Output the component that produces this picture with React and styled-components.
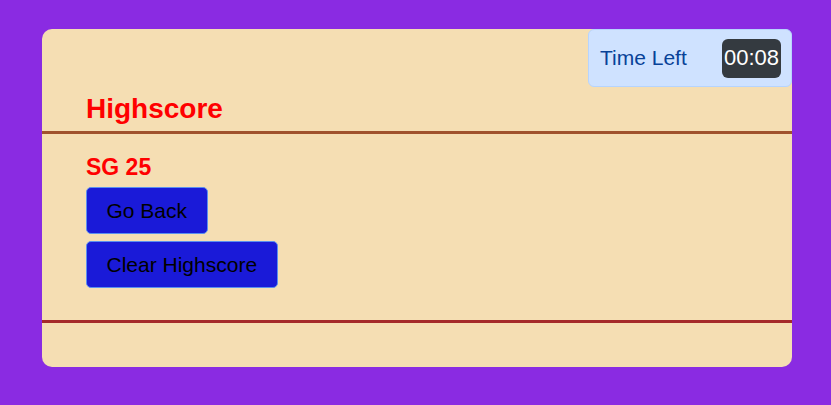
import styled, { createGlobalStyle } from "styled-components";

const GlobalStyle = createGlobalStyle`
  html, body {
    margin: 0;
    padding: 0;
  }
  body {
    background-color: blueviolet;
    font-family: "Liberation Sans", Arial, sans-serif;
    height: 405px;
    overflow: hidden;
  }
`

const Page = styled.div`
  padding: 29px 0 0 42px;
`

const Card = styled.div`
  width: 750px;
  background-color: wheat;
  border-radius: 10px;
  padding-bottom: 44px;
`

const TopBar = styled.div`
  display: flex;
  justify-content: flex-end;
`

const TimerBox = styled.div`
  box-sizing: border-box;
  width: 204px;
  height: 58px;
  display: flex;
  align-items: center;
  justify-content: space-between;
  padding: 0 10px 0 11px;
  background-color: #cfe2ff;
  border: 1px solid #b6d4fe;
  border-radius: 6px;
  color: #084298;
  font-size: 21px;
`

const TimerBadge = styled.span`
  box-sizing: border-box;
  width: 59px;
  height: 39px;
  display: flex;
  align-items: center;
  justify-content: center;
  background-color: #343a40;
  border-radius: 6px;
  color: #fff;
  font-size: 22px;
`

const HeadingRow = styled.div`
  padding: 6px 44px 6px;
`

const Title = styled.h2`
  margin: 0;
  color: red;
  font-size: 28px;
  line-height: 32px;
  font-weight: bold;
`

const Rule = styled.div`
  height: 3px;
  background-color: ${p => p.color};
`

const Content = styled.div`
  padding: 20px 44px 32px;
  display: flex;
  flex-direction: column;
  align-items: flex-start;
`

const Score = styled.div`
  color: red;
  font-size: 23px;
  line-height: 27px;
  font-weight: bold;
  margin-bottom: 6px;
`

const Button = styled.button`
  box-sizing: border-box;
  height: 47px;
  padding: 0 19.5px;
  margin-bottom: ${p => p.last ? 0 : 7}px;
  background-color: #1a1ad8;
  border: 1px solid #5b8ff0;
  border-radius: 5px;
  color: #000;
  font-family: "Liberation Sans", Arial, sans-serif;
  font-size: 21px;
  cursor: pointer;
`

const App = () => {
  return (
    <>
      <GlobalStyle />
      <Page>
        <Card>
          <TopBar>
            <TimerBox>
              <span>Time Left</span>
              <TimerBadge>00:08</TimerBadge>
            </TimerBox>
          </TopBar>
          <HeadingRow>
            <Title>Highscore</Title>
          </HeadingRow>
          <Rule color="sienna" />
          <Content>
            <Score>SG 25</Score>
            <Button>Go Back</Button>
            <Button last>Clear Highscore</Button>
          </Content>
          <Rule color="brown" />
        </Card>
      </Page>
    </>
  )
}

export default App;
